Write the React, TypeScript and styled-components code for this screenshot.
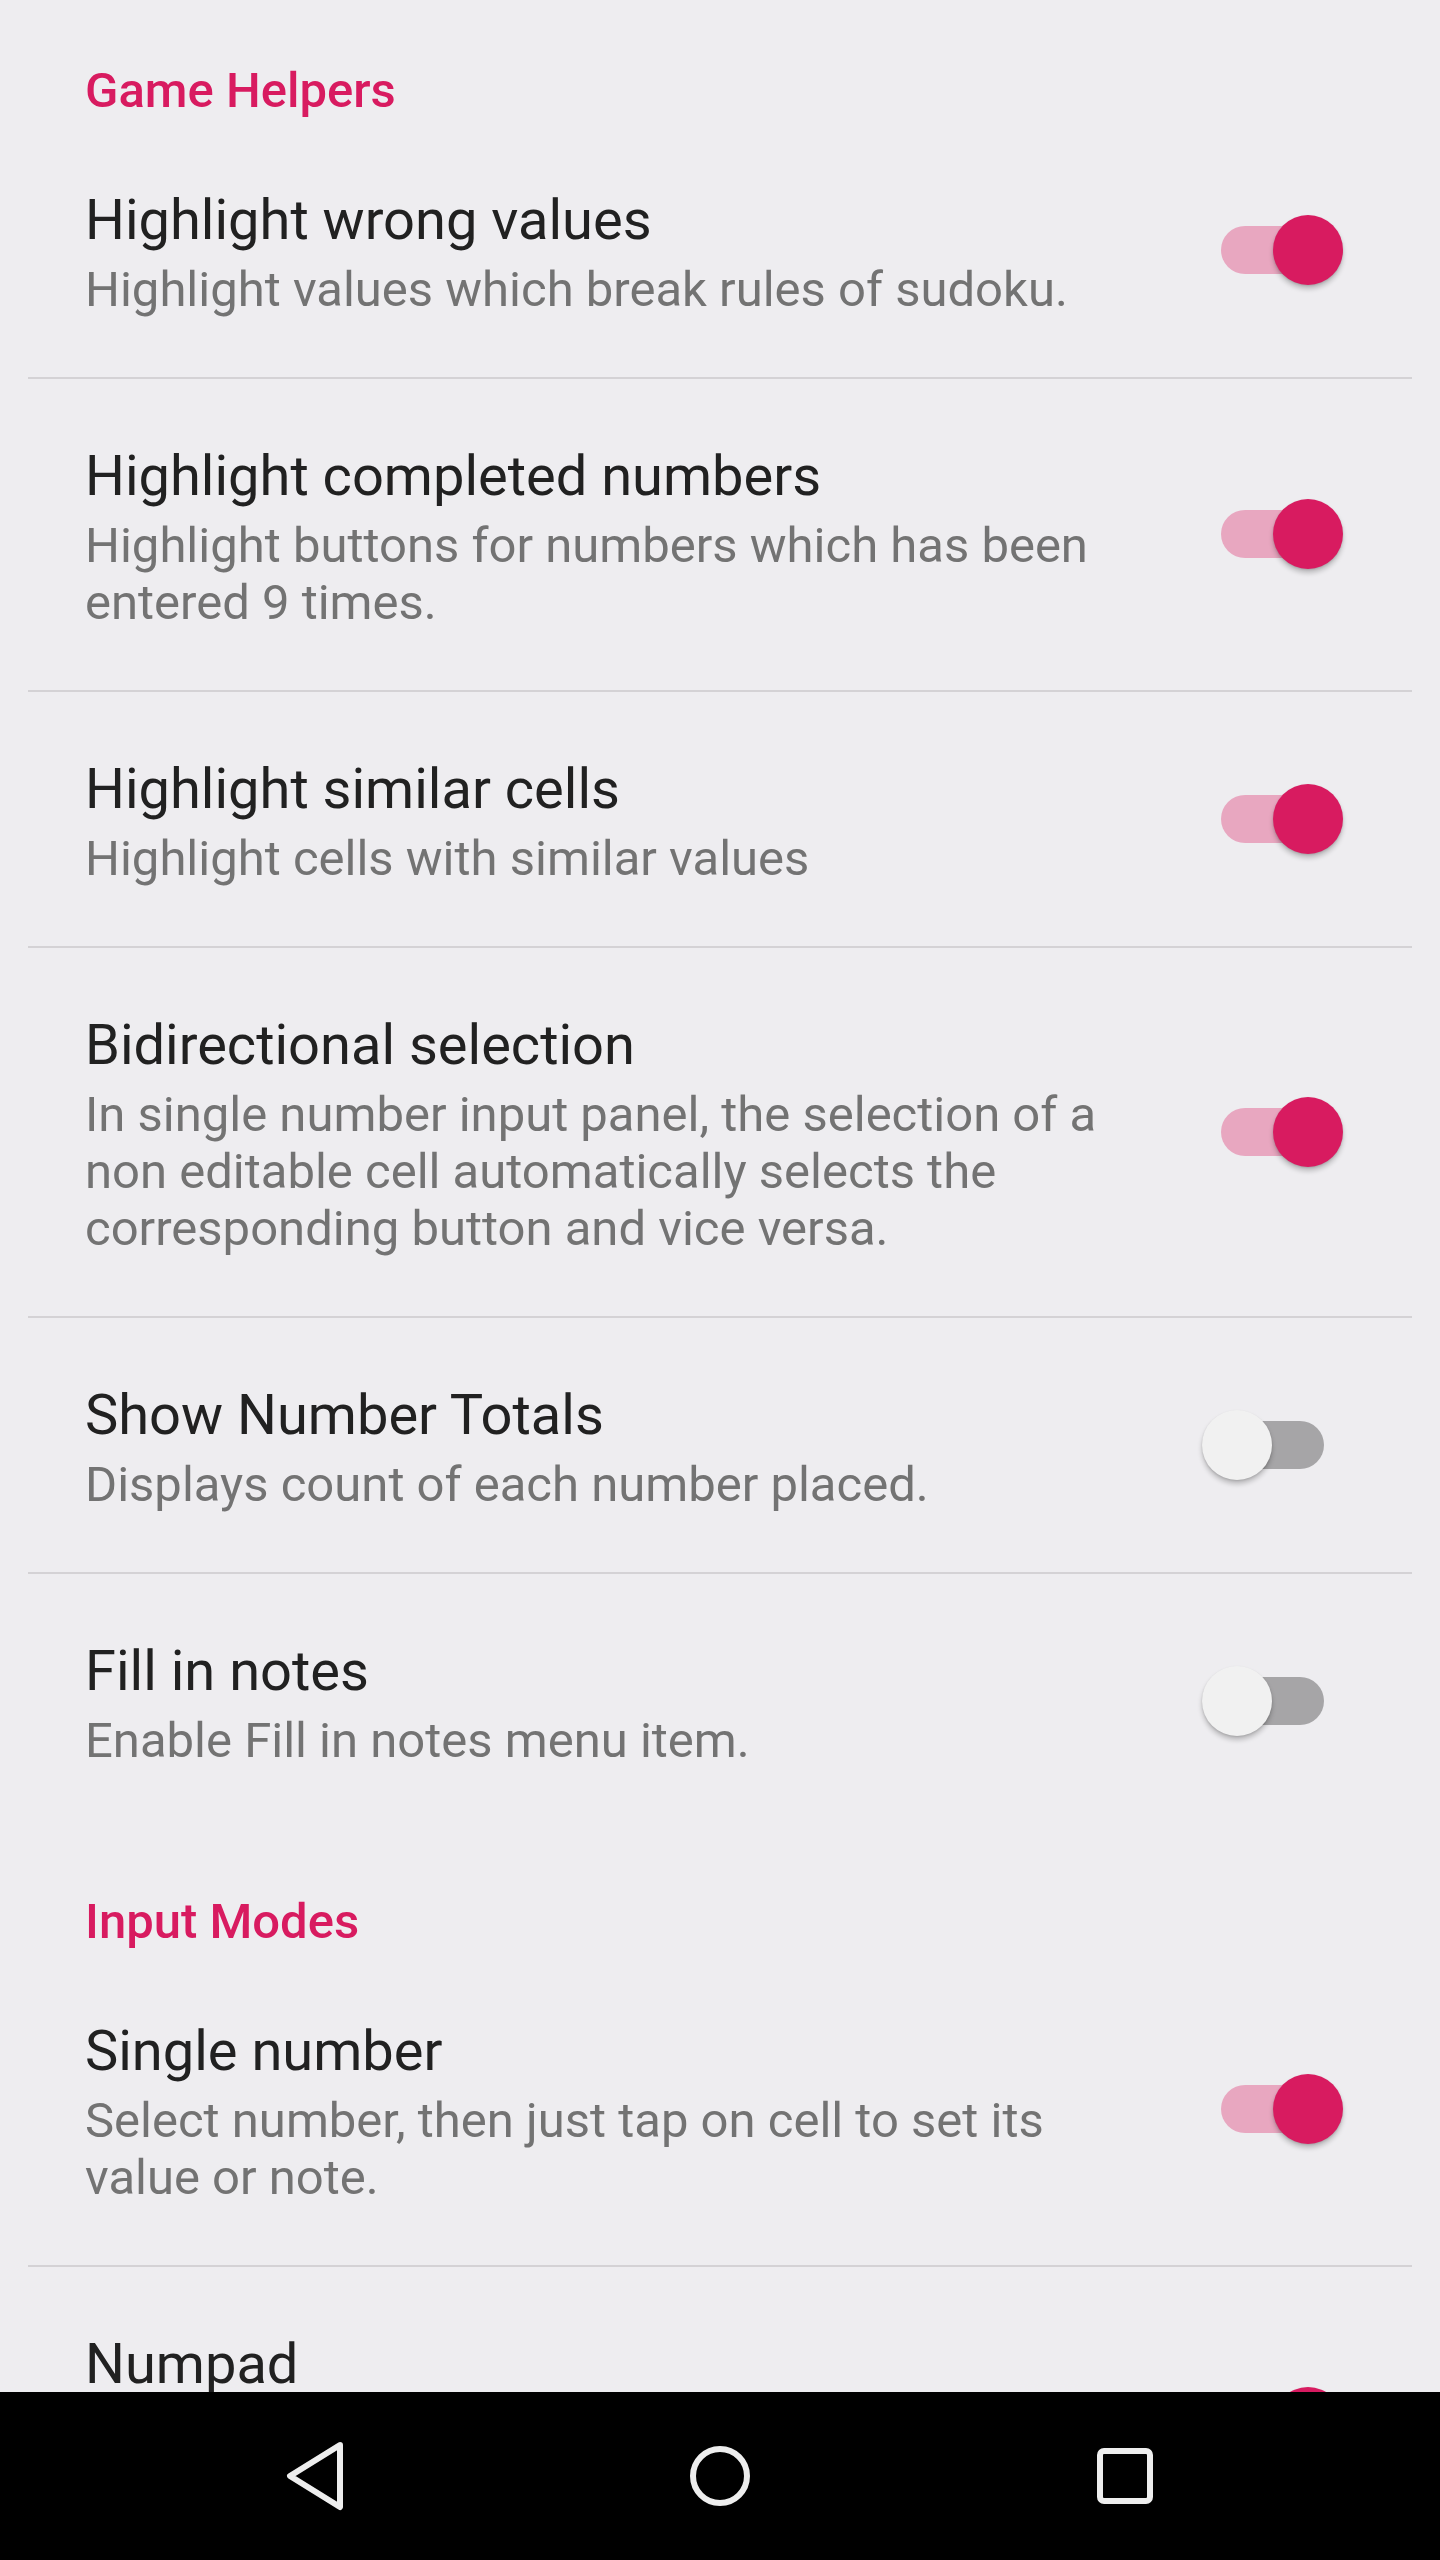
import styled, { createGlobalStyle } from 'styled-components'

const GlobalStyle = createGlobalStyle`
  html, body {
    margin: 0;
    padding: 0;
    background: #000;
  }
  body {
    font-family: Roboto, "Noto Sans", "Liberation Sans", sans-serif;
  }
`

const Screen = styled.div`
  display: flex;
  flex-direction: column;
  width: 1440px;
  height: 2560px;
  overflow: hidden;
  background-color: #eeedf0;
`

const Content = styled.div`
  flex: 1;
  overflow: hidden;
`

const Category = styled.div<{ $first?: boolean }>`
  padding: ${p => (p.$first ? '62px' : '65px')} 85px 4px;
  font-size: 49px;
  line-height: 57px;
  font-weight: 500;
  color: #d81b60;
`

const Row = styled.div`
  display: flex;
  align-items: center;
  gap: 72px;
  padding: 64px 97px 59px 85px;
`

const Texts = styled.div`
  flex: 1;
  display: flex;
  flex-direction: column;
  gap: 8px;
`

const Title = styled.div`
  font-size: 56px;
  line-height: 66px;
  color: #212121;
`

const Summary = styled.div`
  font-size: 49px;
  line-height: 57px;
  color: #737373;
`

const Divider = styled.div`
  height: 2px;
  margin: 0 28px;
  background-color: #d4d2d5;
`

const SwitchBox = styled.div`
  position: relative;
  flex: none;
  width: 141px;
  height: 70px;
  margin-bottom: 6px;
`

const Track = styled.div<{ $on: boolean }>`
  position: absolute;
  top: 11px;
  left: ${p => (p.$on ? '19px' : '3px')};
  width: 119px;
  height: 48px;
  border-radius: 24px;
  background-color: ${p => (p.$on ? '#e8a7c0' : '#a6a5a7')};
`

const Thumb = styled.div<{ $on: boolean }>`
  position: absolute;
  top: 0;
  left: ${p => (p.$on ? '71px' : '0')};
  width: 70px;
  height: 70px;
  border-radius: 50%;
  background-color: ${p => (p.$on ? '#d81b60' : '#f1f1f1')};
  box-shadow: 0 4px 5px rgba(0, 0, 0, 0.22), 0 1px 2px rgba(0, 0, 0, 0.12);
`

const NavBar = styled.div`
  flex: none;
  height: 168px;
  background-color: #000;
  display: flex;
  align-items: center;
  gap: 343px;
  padding-left: 285px;
`

const NavIcon = styled.svg`
  display: block;
  color: #eeeeee;
`

type Pref = { title: string; summary: string; on: boolean }

const helpers: Pref[] = [
  { title: 'Highlight wrong values', summary: 'Highlight values which break rules of sudoku.', on: true },
  { title: 'Highlight completed numbers', summary: 'Highlight buttons for numbers which has been entered 9 times.', on: true },
  { title: 'Highlight similar cells', summary: 'Highlight cells with similar values', on: true },
  {
    title: 'Bidirectional selection',
    summary: 'In single number input panel, the selection of a non editable cell automatically selects the corresponding button and vice versa.',
    on: true,
  },
  { title: 'Show Number Totals', summary: 'Displays count of each number placed.', on: false },
  { title: 'Fill in notes', summary: 'Enable Fill in notes menu item.', on: false },
]

const modes: Pref[] = [
  { title: 'Single number', summary: 'Select number, then just tap on cell to set its value or note.', on: true },
  { title: 'Numpad', summary: 'Select cell, then tap on number button to set its value or note.', on: true },
]

const Switch = ({ on }: { on: boolean }) => (
  <SwitchBox>
    <Track $on={on} />
    <Thumb $on={on} />
  </SwitchBox>
)

const PrefList = ({ items }: { items: Pref[] }) => (
  <>
    {items.map((item, i) => (
      <div key={item.title}>
        <Row>
          <Texts>
            <Title>{item.title}</Title>
            <Summary>{item.summary}</Summary>
          </Texts>
          <Switch on={item.on} />
        </Row>
        {i < items.length - 1 && <Divider />}
      </div>
    ))}
  </>
)

export default function App() {
  return (
    <>
      <GlobalStyle />
      <Screen>
        <Content>
          <Category $first>Game Helpers</Category>
          <PrefList items={helpers} />
          <Category>Input Modes</Category>
          <PrefList items={modes} />
        </Content>
        <NavBar>
          <NavIcon width="60" height="70" viewBox="0 0 60 70">
            <path d="M55 4 L5 35 L55 66 Z" fill="none" stroke="currentColor" strokeWidth="6" strokeLinejoin="round" />
          </NavIcon>
          <NavIcon width="64" height="64" viewBox="0 0 64 64">
            <circle cx="32" cy="32" r="27" fill="none" stroke="currentColor" strokeWidth="6" />
          </NavIcon>
          <NavIcon width="60" height="60" viewBox="0 0 60 60">
            <rect x="5" y="5" width="50" height="50" rx="4" fill="none" stroke="currentColor" strokeWidth="6" />
          </NavIcon>
        </NavBar>
      </Screen>
    </>
  )
}
